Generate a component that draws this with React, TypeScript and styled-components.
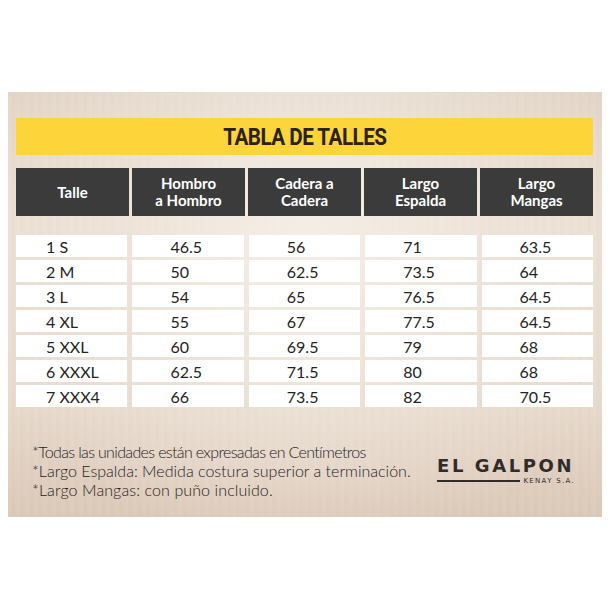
import styled, { createGlobalStyle } from 'styled-components';

const GlobalStyle = createGlobalStyle`
  html, body {
    margin: 0;
    padding: 0;
    background: #ffffff;
  }
`;

const Page = styled.div`
  width: 610px;
  height: 610px;
  box-sizing: border-box;
  padding: 92px 8px 0 8px;
`;

const Panel = styled.div`
  width: 594px;
  height: 425px;
  box-sizing: border-box;
  padding: 26px 9px 0 8px;
  background:
    radial-gradient(ellipse at 50% 35%, rgba(246, 240, 233, 0.9) 0%, rgba(240, 231, 221, 0.5) 45%, rgba(220, 203, 187, 0) 80%),
    repeating-linear-gradient(90deg, rgba(255, 255, 255, 0.05) 0px, rgba(255, 255, 255, 0.05) 3px, rgba(200, 180, 160, 0.06) 4px, rgba(255, 255, 255, 0.03) 9px),
    linear-gradient(180deg, #e2d4c6 0%, #ebdfd3 30%, #e8dbce 70%, #dbc8b7 100%);
  font-family: Lato, 'Liberation Sans', sans-serif;
`;

const TitleBar = styled.div`
  height: 37px;
  background: #fdd43a;
  display: flex;
  align-items: center;
  justify-content: center;
`;

const Title = styled.h1`
  margin: 0;
  font-family: Roboto, 'Liberation Sans', sans-serif;
  font-weight: 700;
  font-size: 24px;
  letter-spacing: -0.6px;
  color: #2b2219;
  transform: scaleX(0.86);
`;

const HeaderRow = styled.div`
  margin-top: 13px;
  display: grid;
  grid-template-columns: repeat(5, 1fr);
  column-gap: 3px;
  height: 48px;
`;

const HeaderCell = styled.div`
  background: #3b3b3b;
  color: #ffffff;
  display: flex;
  align-items: center;
  justify-content: center;
  text-align: center;
  font-weight: 700;
  font-size: 15px;
  line-height: 17px;
`;

const Body = styled.div`
  margin-top: 19px;
  display: grid;
  grid-template-columns: repeat(5, 1fr);
  grid-auto-rows: 22px;
  column-gap: 5px;
  row-gap: 3px;
`;

const DataCell = styled.div<{ $indent: number }>`
  background: #ffffff;
  display: flex;
  align-items: center;
  padding-left: ${(p) => p.$indent}px;
  font-size: 16px;
  color: #232323;
`;

const Footer = styled.div`
  margin-top: 35px;
  display: flex;
  align-items: center;
  justify-content: space-between;
`;

const Notes = styled.div`
  margin-left: 16px;
  font-family: Lato, 'Liberation Sans', sans-serif;
  font-size: 16px;
  font-weight: 300;
  line-height: 19px;
  color: #26211e;
`;

const Note = styled.p<{ $spacing: number }>`
  margin: 0;
  letter-spacing: ${(p) => p.$spacing}px;
  white-space: nowrap;
`;

const Logo = styled.div`
  margin-right: 18px;
  display: flex;
  flex-direction: column;
  align-items: stretch;
  width: 138px;
`;

const LogoName = styled.div`
  font-family: 'DejaVu Sans', sans-serif;
  font-weight: 700;
  font-size: 18px;
  letter-spacing: 2.6px;
  line-height: 18px;
  color: #2f2c2a;
  white-space: nowrap;
`;

const LogoSub = styled.div`
  margin-top: 2px;
  display: flex;
  align-items: center;
  gap: 3px;
`;

const LogoLine = styled.span`
  flex: 1;
  height: 2px;
  background: #2f2c2a;
`;

const LogoSubText = styled.span`
  font-family: 'DejaVu Sans', sans-serif;
  font-size: 7px;
  letter-spacing: 1.3px;
  color: #2f2c2a;
  white-space: nowrap;
`;

const headers = [
  ['Talle'],
  ['Hombro', 'a Hombro'],
  ['Cadera a', 'Cadera'],
  ['Largo', 'Espalda'],
  ['Largo', 'Mangas'],
];

const rows = [
  ['1 S', '46.5', '56', '71', '63.5'],
  ['2 M', '50', '62.5', '73.5', '64'],
  ['3 L', '54', '65', '76.5', '64.5'],
  ['4 XL', '55', '67', '77.5', '64.5'],
  ['5 XXL', '60', '69.5', '79', '68'],
  ['6 XXXL', '62.5', '71.5', '80', '68'],
  ['7 XXX4', '66', '73.5', '82', '70.5'],
];

const notes = [
  { text: '*Todas las unidades están expresadas en Centímetros', spacing: -0.65 },
  { text: '*Largo Espalda: Medida costura superior a terminación.', spacing: 0 },
  { text: '*Largo Mangas: con puño incluido.', spacing: 0.1 },
];

export default function App() {
  return (
    <Page>
      <GlobalStyle />
      <Panel>
        <TitleBar>
          <Title>TABLA DE TALLES</Title>
        </TitleBar>
        <HeaderRow>
          {headers.map((lines, i) => (
            <HeaderCell key={i}>
              <span>
                {lines.map((l, k) => (
                  <span key={k}>
                    {k > 0 && <br />}
                    {l}
                  </span>
                ))}
              </span>
            </HeaderCell>
          ))}
        </HeaderRow>
        <Body>
          {rows.map((row, r) =>
            row.map((value, c) => (
              <DataCell key={`${r}-${c}`} $indent={c === 0 ? 30 : 38}>
                {value}
              </DataCell>
            )),
          )}
        </Body>
        <Footer>
          <Notes>
            {notes.map((n) => (
              <Note key={n.text} $spacing={n.spacing}>
                {n.text}
              </Note>
            ))}
          </Notes>
          <Logo>
            <LogoName>EL GALPON</LogoName>
            <LogoSub>
              <LogoLine />
              <LogoSubText>KENAY S.A.</LogoSubText>
            </LogoSub>
          </Logo>
        </Footer>
      </Panel>
    </Page>
  );
}
